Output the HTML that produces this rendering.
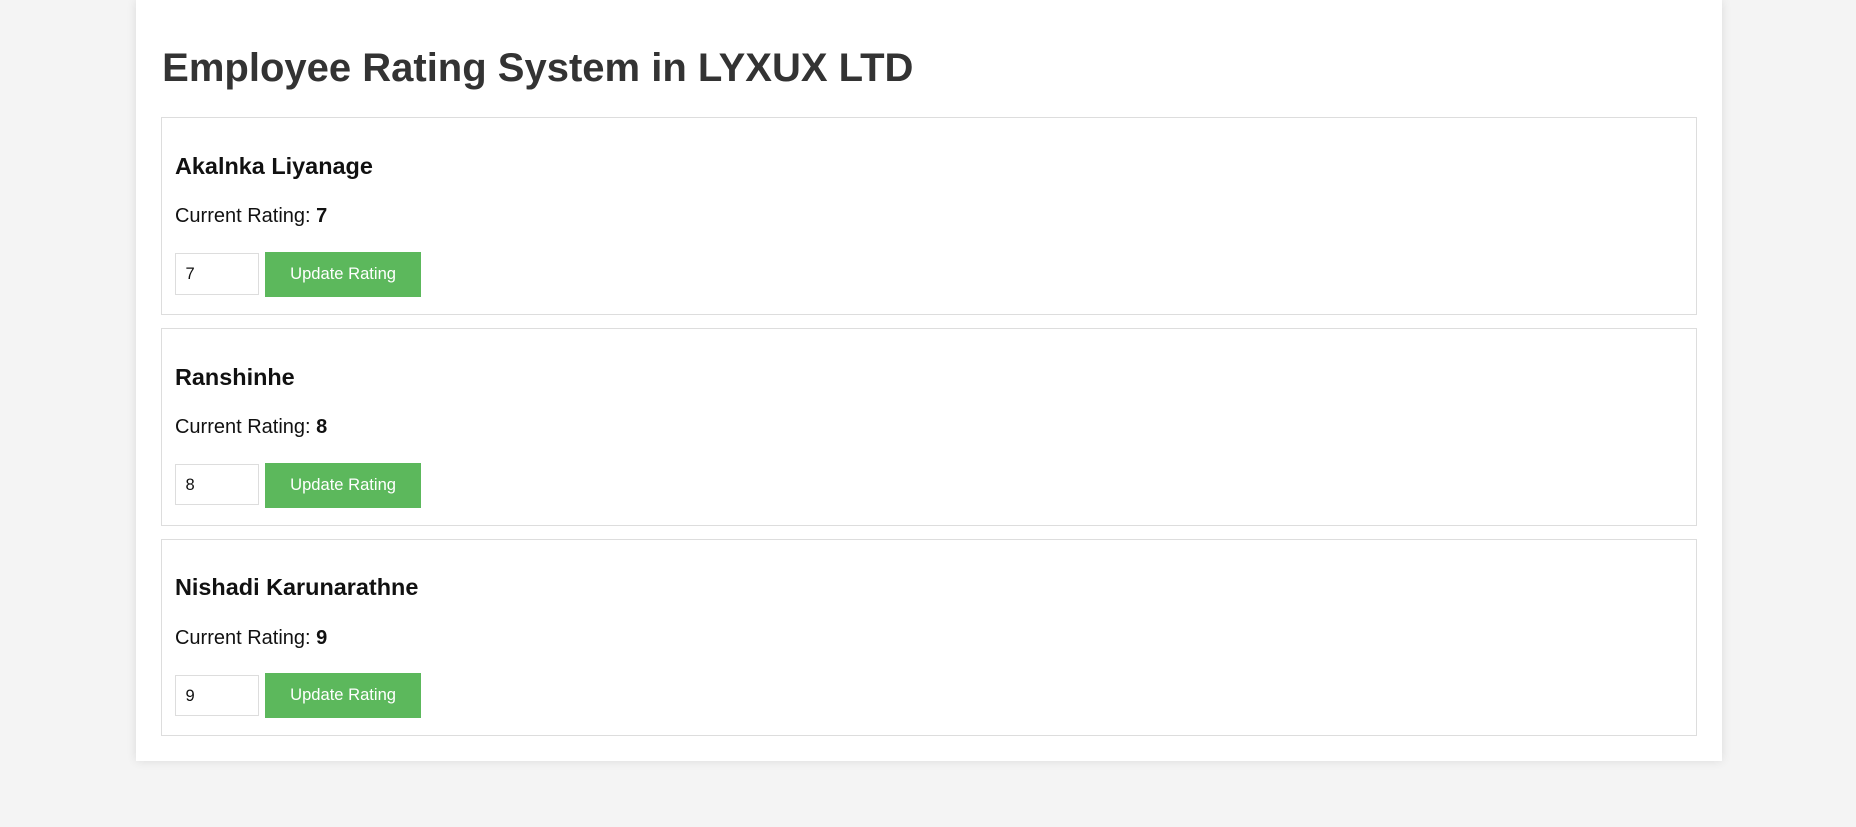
<!DOCTYPE html>
<html><head><meta charset="utf-8"><style>
html,body{margin:0;padding:0;background:#f4f4f4;overflow:hidden}
body{width:1568px;height:699px;zoom:1.18367;font-family:"Liberation Sans",Arial,sans-serif;position:relative}
.c{position:absolute;left:115px;top:0;width:1340px;height:643px;background:#fff;box-shadow:0 0 8px rgba(0,0,0,.1)}
h1{position:absolute;margin:0;left:137px;top:40.5px;font-size:33.8px;line-height:33.8px;color:#333;font-weight:bold;white-space:nowrap}
.card{position:absolute;left:136px;width:1298px;height:167px;border:1px solid #ddd;box-sizing:border-box;background:#fff}
.n{position:absolute;left:11px;top:31px;font-size:19.8px;line-height:19.8px;font-weight:bold;color:#111}
.r{position:absolute;left:11px;top:74.5px;font-size:16.9px;line-height:16.9px;color:#111}
.i{position:absolute;left:11px;top:114px;width:71px;height:35px;border:1px solid #ddd;box-sizing:border-box;font-size:14px;line-height:33px;padding-left:8px;color:#111}
.b{position:absolute;left:87px;top:113px;width:132px;height:38px;background:#5cb85c;color:#fff;font-size:14px;line-height:38px;text-align:center}
</style></head><body>
<div class="c"></div>
<h1>Employee Rating System in LYXUX LTD</h1>
<div class="card" style="top:99px"><div class="n">Akalnka Liyanage</div><div class="r">Current Rating: <b>7</b></div><div class="i">7</div><div class="b">Update Rating</div></div>
<div class="card" style="top:277px"><div class="n">Ranshinhe</div><div class="r">Current Rating: <b>8</b></div><div class="i">8</div><div class="b">Update Rating</div></div>
<div class="card" style="top:455px"><div class="n">Nishadi Karunarathne</div><div class="r">Current Rating: <b>9</b></div><div class="i">9</div><div class="b">Update Rating</div></div>
</body></html>
